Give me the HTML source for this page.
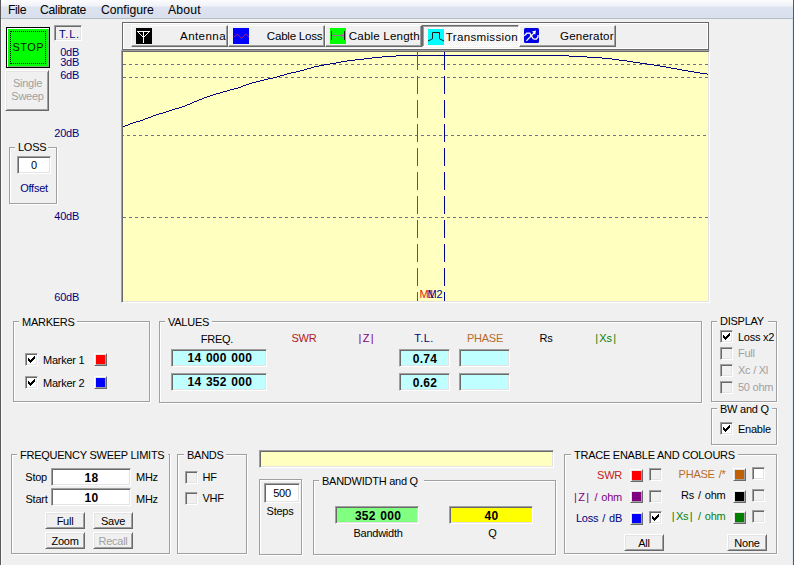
<!DOCTYPE html><html><head><meta charset="utf-8"><style>html,body{margin:0;padding:0;}body{width:795px;height:565px;overflow:hidden;position:relative;background:#f0f0f0;font-family:'Liberation Sans', sans-serif;}div{font-family:'Liberation Sans', sans-serif;}svg{display:block}</style></head><body>
<div style="position:absolute;left:0px;top:0px;width:1px;height:565px;background:#5a5a5a;"></div>
<div style="position:absolute;left:1px;top:0px;width:1px;height:565px;background:#fafafa;"></div>
<div style="position:absolute;left:793px;top:0px;width:1px;height:565px;background:#5a5a5a;"></div>
<div style="position:absolute;left:792px;top:0px;width:1px;height:565px;background:#dfe6ef;"></div>
<div style="position:absolute;left:794px;top:0px;width:1px;height:565px;background:#fff;"></div>
<div style="position:absolute;left:1px;top:0px;width:792px;height:18px;background:linear-gradient(#fcfcfe 0px,#f0f2f8 6px,#dde3ef 7px,#d9dfed 17px,#dde2ee 18px);"></div>
<div style="position:absolute;left:1px;top:18px;width:792px;height:1px;background:#b4bcc8;"></div>
<div style="position:absolute;top:3.68px;font-size:12.2px;line-height:12.2px;color:#000;white-space:pre;left:8px;letter-spacing:-0.4px;">File</div>
<div style="position:absolute;top:3.68px;font-size:12.2px;line-height:12.2px;color:#000;white-space:pre;left:40px;letter-spacing:-0.3px;">Calibrate</div>
<div style="position:absolute;top:3.68px;font-size:12.2px;line-height:12.2px;color:#000;white-space:pre;left:101px;letter-spacing:0px;">Configure</div>
<div style="position:absolute;top:3.68px;font-size:12.2px;line-height:12.2px;color:#000;white-space:pre;left:168px;letter-spacing:0.2px;">About</div>
<div style="position:absolute;left:6px;top:27px;width:44px;height:41px;background:#00ff00;box-sizing:border-box;border:1px solid #000;box-shadow:inset 1px 1px 0 #fff, inset -1px -1px 0 #70b070;"></div>
<div style="position:absolute;left:10px;top:31px;width:36px;height:33px;box-sizing:border-box;border:1px dotted #000;"></div>
<div style="position:absolute;top:42.3px;font-size:11px;line-height:11px;color:#0a200a;white-space:pre;left:-71.7px;width:200px;text-align:center;letter-spacing:0.5px;">STOP</div>
<div style="position:absolute;left:5px;top:70px;width:44px;height:41px;background:#f0f0f0;box-sizing:border-box;border-top:1px solid #fff;border-left:1px solid #fff;border-bottom:1px solid #696969;border-right:1px solid #696969;box-shadow:inset 1px 1px 0 #e3e3e3, inset -1px -1px 0 #a0a0a0;"></div>
<div style="position:absolute;top:78.30000000000001px;font-size:11px;line-height:11px;color:#a0a0a0;white-space:pre;left:-72.5px;width:200px;text-align:center;letter-spacing:-0.25px;">Single</div>
<div style="position:absolute;top:91.30000000000001px;font-size:11px;line-height:11px;color:#a0a0a0;white-space:pre;left:-72.5px;width:200px;text-align:center;letter-spacing:-0.25px;">Sweep</div>
<div style="position:absolute;left:54px;top:25px;width:28px;height:16px;background:#f0f0f0;box-sizing:border-box;border-top:1px solid #a0a0a0;border-left:1px solid #a0a0a0;border-bottom:1px solid #fff;border-right:1px solid #fff;box-shadow:inset 1px 1px 0 #696969, inset -1px -1px 0 #e3e3e3;"></div>
<div style="position:absolute;top:29.299999999999997px;font-size:11px;line-height:11px;color:#000080;white-space:pre;left:-30.5px;width:200px;text-align:center;letter-spacing:0.8px;">T.L.</div>
<div style="position:absolute;top:47.3px;font-size:11px;line-height:11px;color:#000080;white-space:pre;right:716px;text-align:right;letter-spacing:-0.25px;">0dB</div>
<div style="position:absolute;top:57.3px;font-size:11px;line-height:11px;color:#000080;white-space:pre;right:716px;text-align:right;letter-spacing:-0.25px;">3dB</div>
<div style="position:absolute;top:70.30000000000001px;font-size:11px;line-height:11px;color:#000080;white-space:pre;right:716px;text-align:right;letter-spacing:-0.25px;">6dB</div>
<div style="position:absolute;top:128.3px;font-size:11px;line-height:11px;color:#000080;white-space:pre;right:716px;text-align:right;letter-spacing:-0.25px;">20dB</div>
<div style="position:absolute;top:211.3px;font-size:11px;line-height:11px;color:#000080;white-space:pre;right:716px;text-align:right;letter-spacing:-0.25px;">40dB</div>
<div style="position:absolute;top:292.29999999999995px;font-size:11px;line-height:11px;color:#000080;white-space:pre;right:716px;text-align:right;letter-spacing:-0.25px;">60dB</div>
<div style="position:absolute;left:10px;top:148px;width:48px;height:57px;box-sizing:border-box;border:1px solid #fff;"></div>
<div style="position:absolute;left:9px;top:147px;width:48px;height:57px;box-sizing:border-box;border:1px solid #a0a0a0;"></div>
<div style="position:absolute;left:15px;top:145px;width:33px;height:5px;background:#f0f0f0;"></div>
<div style="position:absolute;top:142.3px;font-size:11px;line-height:11px;color:#000;white-space:pre;left:18px;letter-spacing:-0.25px;">LOSS</div>
<div style="position:absolute;left:17px;top:156px;width:34px;height:18px;background:#fff;box-sizing:border-box;border-top:1px solid #a0a0a0;border-left:1px solid #a0a0a0;border-bottom:1px solid #fff;border-right:1px solid #fff;box-shadow:inset 1px 1px 0 #696969, inset -1px -1px 0 #e3e3e3;"></div>
<div style="position:absolute;top:160.3px;font-size:11px;line-height:11px;color:#000;white-space:pre;left:-66px;width:200px;text-align:center;letter-spacing:-0.25px;">0</div>
<div style="position:absolute;top:183.3px;font-size:11px;line-height:11px;color:#000080;white-space:pre;left:-66px;width:200px;text-align:center;letter-spacing:-0.25px;">Offset</div>
<div style="position:absolute;left:122px;top:22px;width:587px;height:28px;box-sizing:border-box;border:1px solid #696969;box-shadow:inset 1px 1px 0 #fff, inset -1px -1px 0 #fff;background:#f0f0f0;"></div>
<div style="position:absolute;left:131px;top:25px;width:97px;height:22px;box-sizing:border-box;border-top:1px solid #fff;border-left:1px solid #fff;border-bottom:1px solid #696969;border-right:1px solid #696969;box-shadow:inset -1px -1px 0 #a0a0a0;background:#f0f0f0;"></div>
<div style="position:absolute;top:30.24px;font-size:11.6px;line-height:11.6px;color:#000;white-space:pre;right:569.0px;text-align:right;letter-spacing:0.4px;">Antenna</div>
<div style="position:absolute;left:228px;top:25px;width:97px;height:22px;box-sizing:border-box;border-top:1px solid #fff;border-left:1px solid #fff;border-bottom:1px solid #696969;border-right:1px solid #696969;box-shadow:inset -1px -1px 0 #a0a0a0;background:#f0f0f0;"></div>
<div style="position:absolute;top:30.24px;font-size:11.6px;line-height:11.6px;color:#000;white-space:pre;right:472.65px;text-align:right;letter-spacing:-0.25px;">Cable Loss</div>
<div style="position:absolute;left:325px;top:25px;width:97px;height:22px;box-sizing:border-box;border-top:1px solid #fff;border-left:1px solid #fff;border-bottom:1px solid #696969;border-right:1px solid #696969;box-shadow:inset -1px -1px 0 #a0a0a0;background:#f0f0f0;"></div>
<div style="position:absolute;top:30.24px;font-size:11.6px;line-height:11.6px;color:#000;white-space:pre;right:375.22999999999996px;text-align:right;letter-spacing:0.17px;">Cable Length</div>
<div style="position:absolute;left:422px;top:25px;width:97px;height:22px;box-sizing:border-box;border-top:1px solid #696969;border-left:1px solid #696969;border-bottom:1px solid #fff;border-right:1px solid #fff;box-shadow:inset 1px 1px 0 #a0a0a0;background-color:#fff;background-image:linear-gradient(45deg,#f0f0f0 25%,transparent 25%,transparent 75%,#f0f0f0 75%),linear-gradient(45deg,#f0f0f0 25%,transparent 25%,transparent 75%,#f0f0f0 75%);background-size:2px 2px;background-position:0 0,1px 1px;"></div>
<div style="position:absolute;top:31.24px;font-size:11.6px;line-height:11.6px;color:#000;white-space:pre;right:277.1px;text-align:right;letter-spacing:0.3px;">Transmission</div>
<div style="position:absolute;left:519px;top:25px;width:97px;height:22px;box-sizing:border-box;border-top:1px solid #fff;border-left:1px solid #fff;border-bottom:1px solid #696969;border-right:1px solid #696969;box-shadow:inset -1px -1px 0 #a0a0a0;background:#f0f0f0;"></div>
<div style="position:absolute;top:30.24px;font-size:11.6px;line-height:11.6px;color:#000;white-space:pre;right:181.22000000000003px;text-align:right;letter-spacing:0.18px;">Generator</div>
<svg style="position:absolute;left:136px;top:28px" width="16" height="16"><rect width="16" height="16" fill="#000"/><path d="M1 3.5 H14 M7.5 3.5 V15 M1.5 3.5 L7.5 9.5 L13.5 3.5" stroke="#fff" stroke-width="1" fill="none"/></svg>
<svg style="position:absolute;left:233px;top:28px" width="16" height="16"><rect width="16" height="16" fill="#0000ff"/><path d="M1 9 L4.5 6 L8.5 10.5 L12.5 6 L16 9" stroke="#a02888" stroke-width="1" fill="none"/></svg>
<svg style="position:absolute;left:330px;top:28px" width="16" height="16"><rect width="16" height="16" fill="#00ff00"/><path d="M1.5 3 V12 M14.5 3 V12" stroke="#1a1a1a" stroke-width="1" fill="none"/><path d="M2 7.5 H14 M4.5 5.5 L2.5 7.5 L4.5 9.5 M11.5 5.5 L13.5 7.5 L11.5 9.5" stroke="#9a6aa0" stroke-width="1" fill="none"/></svg>
<svg style="position:absolute;left:428px;top:29px" width="16" height="16"><rect width="16" height="16" fill="#00ffff"/><path d="M0 12 L4.5 9.8 V3.5 H11.5 V9.8 L16 12" stroke="#1a1a1a" stroke-width="1" fill="none"/><rect x="5" y="4" width="1" height="1" fill="#ff9090"/><rect x="10" y="4" width="1" height="1" fill="#ff9090"/></svg>
<svg style="position:absolute;left:524px;top:28px" width="15" height="15"><rect width="15" height="15" rx="1.5" fill="#0000e0"/><path d="M0.3 7.8 L2.8 5.2 L5.8 5.2 L9 10.6 L10.2 11.2 L12.4 11.2 L14 9 L14 7" stroke="#fff" stroke-width="1.3" fill="none"/><path d="M6.6 7.2 L7.6 8.9" stroke="#ffff40" stroke-width="1.6"/><path d="M2.4 12.8 L10.5 4.5" stroke="#fff" stroke-width="1.2"/><path d="M8 3.6 L12 2.6 L11.2 6.8 Z" fill="#fff"/></svg>
<div style="position:absolute;left:121px;top:50px;width:589px;height:253px;box-sizing:border-box;background:#ffffc0;border-top:1px solid #a0a0a0;border-left:1px solid #a0a0a0;border-bottom:1px solid #fff;border-right:1px solid #fff;box-shadow:inset 1px 1px 0 #696969, inset -1px -1px 0 #e3e3e3;"></div>
<svg style="position:absolute;left:123px;top:52px" width="585" height="249" shape-rendering="crispEdges"><line x1="0" y1="12.5" x2="585" y2="12.5" stroke="#707088" stroke-width="1" stroke-dasharray="3 3" stroke-dashoffset="0"/><line x1="0" y1="25.5" x2="585" y2="25.5" stroke="#707088" stroke-width="1" stroke-dasharray="3 3" stroke-dashoffset="0"/><line x1="0" y1="83.5" x2="585" y2="83.5" stroke="#707088" stroke-width="1" stroke-dasharray="3 3" stroke-dashoffset="2"/><line x1="0" y1="165.5" x2="585" y2="165.5" stroke="#707088" stroke-width="1" stroke-dasharray="3 3" stroke-dashoffset="0"/><path d="M0 74h1v1h-1zM1 74h1v1h-1zM2 73h1v1h-1zM3 73h1v1h-1zM4 73h1v1h-1zM5 72h1v1h-1zM6 72h1v1h-1zM7 71h1v1h-1zM8 71h1v1h-1zM9 71h1v1h-1zM10 70h1v1h-1zM11 70h1v1h-1zM12 70h1v1h-1zM13 69h1v1h-1zM14 69h1v1h-1zM15 69h1v1h-1zM16 69h1v1h-1zM17 68h1v1h-1zM18 68h1v1h-1zM19 68h1v1h-1zM20 67h1v1h-1zM21 67h1v1h-1zM22 66h1v1h-1zM23 66h1v1h-1zM24 66h1v1h-1zM25 65h1v1h-1zM26 65h1v1h-1zM27 65h1v1h-1zM28 64h1v1h-1zM29 64h1v1h-1zM30 63h1v1h-1zM31 63h1v1h-1zM32 63h1v1h-1zM33 62h1v1h-1zM34 62h1v1h-1zM35 62h1v1h-1zM36 61h1v1h-1zM37 61h1v1h-1zM38 61h1v1h-1zM39 61h1v1h-1zM40 60h1v1h-1zM41 60h1v1h-1zM42 60h1v1h-1zM43 59h1v1h-1zM44 59h1v1h-1zM45 59h1v1h-1zM46 58h1v1h-1zM47 58h1v1h-1zM48 58h1v1h-1zM49 57h1v1h-1zM50 57h1v1h-1zM51 57h1v1h-1zM52 56h1v1h-1zM53 56h1v1h-1zM54 56h1v1h-1zM55 56h1v1h-1zM56 55h1v1h-1zM57 55h1v1h-1zM58 55h1v1h-1zM59 54h1v1h-1zM60 54h1v1h-1zM61 54h1v1h-1zM62 53h1v1h-1zM63 53h1v1h-1zM64 52h1v1h-1zM65 52h1v1h-1zM66 52h1v1h-1zM67 51h1v1h-1zM68 51h1v1h-1zM69 50h1v1h-1zM70 50h1v1h-1zM71 49h1v1h-1zM72 49h1v1h-1zM73 49h1v1h-1zM74 48h1v1h-1zM75 48h1v1h-1zM76 47h1v1h-1zM77 47h1v1h-1zM78 47h1v1h-1zM79 46h1v1h-1zM80 46h1v1h-1zM81 45h1v1h-1zM82 45h1v1h-1zM83 45h1v1h-1zM84 44h1v1h-1zM85 44h1v1h-1zM86 44h1v1h-1zM87 43h1v1h-1zM88 43h1v1h-1zM89 43h1v1h-1zM90 42h1v1h-1zM91 42h1v1h-1zM92 42h1v1h-1zM93 41h1v1h-1zM94 41h1v1h-1zM95 41h1v1h-1zM96 41h1v1h-1zM97 40h1v1h-1zM98 40h1v1h-1zM99 40h1v1h-1zM100 39h1v1h-1zM101 39h1v1h-1zM102 39h1v1h-1zM103 39h1v1h-1zM104 38h1v1h-1zM105 38h1v1h-1zM106 38h1v1h-1zM107 37h1v1h-1zM108 37h1v1h-1zM109 37h1v1h-1zM110 37h1v1h-1zM111 36h1v1h-1zM112 36h1v1h-1zM113 36h1v1h-1zM114 36h1v1h-1zM115 35h1v1h-1zM116 35h1v1h-1zM117 35h1v1h-1zM118 34h1v1h-1zM119 34h1v1h-1zM120 33h1v1h-1zM121 33h1v1h-1zM122 33h1v1h-1zM123 32h1v1h-1zM124 32h1v1h-1zM125 32h1v1h-1zM126 31h1v1h-1zM127 31h1v1h-1zM128 31h1v1h-1zM129 30h1v1h-1zM130 30h1v1h-1zM131 30h1v1h-1zM132 30h1v1h-1zM133 29h1v1h-1zM134 29h1v1h-1zM135 29h1v1h-1zM136 29h1v1h-1zM137 28h1v1h-1zM138 28h1v1h-1zM139 28h1v1h-1zM140 28h1v1h-1zM141 27h1v1h-1zM142 27h1v1h-1zM143 27h1v1h-1zM144 27h1v1h-1zM145 26h1v1h-1zM146 26h1v1h-1zM147 26h1v1h-1zM148 26h1v1h-1zM149 26h1v1h-1zM150 25h1v1h-1zM151 25h1v1h-1zM152 25h1v1h-1zM153 25h1v1h-1zM154 24h1v1h-1zM155 24h1v1h-1zM156 24h1v1h-1zM157 23h1v1h-1zM158 23h1v1h-1zM159 23h1v1h-1zM160 23h1v1h-1zM161 22h1v1h-1zM162 22h1v1h-1zM163 22h1v1h-1zM164 21h1v1h-1zM165 21h1v1h-1zM166 21h1v1h-1zM167 21h1v1h-1zM168 20h1v1h-1zM169 20h1v1h-1zM170 20h1v1h-1zM171 20h1v1h-1zM172 20h1v1h-1zM173 19h1v1h-1zM174 19h1v1h-1zM175 19h1v1h-1zM176 19h1v1h-1zM177 18h1v1h-1zM178 18h1v1h-1zM179 18h1v1h-1zM180 18h1v1h-1zM181 17h1v1h-1zM182 17h1v1h-1zM183 17h1v1h-1zM184 16h1v1h-1zM185 16h1v1h-1zM186 16h1v1h-1zM187 16h1v1h-1zM188 15h1v1h-1zM189 15h1v1h-1zM190 15h1v1h-1zM191 14h1v1h-1zM192 14h1v1h-1zM193 14h1v1h-1zM194 14h1v1h-1zM195 14h1v1h-1zM196 13h1v1h-1zM197 13h1v1h-1zM198 13h1v1h-1zM199 13h1v1h-1zM200 13h1v1h-1zM201 12h1v1h-1zM202 12h1v1h-1zM203 12h1v1h-1zM204 12h1v1h-1zM205 12h1v1h-1zM206 12h1v1h-1zM207 11h1v1h-1zM208 11h1v1h-1zM209 11h1v1h-1zM210 11h1v1h-1zM211 11h1v1h-1zM212 11h1v1h-1zM213 10h1v1h-1zM214 10h1v1h-1zM215 10h1v1h-1zM216 10h1v1h-1zM217 10h1v1h-1zM218 9h1v1h-1zM219 9h1v1h-1zM220 9h1v1h-1zM221 9h1v1h-1zM222 9h1v1h-1zM223 9h1v1h-1zM224 8h1v1h-1zM225 8h1v1h-1zM226 8h1v1h-1zM227 8h1v1h-1zM228 8h1v1h-1zM229 8h1v1h-1zM230 8h1v1h-1zM231 8h1v1h-1zM232 7h1v1h-1zM233 7h1v1h-1zM234 7h1v1h-1zM235 7h1v1h-1zM236 7h1v1h-1zM237 7h1v1h-1zM238 7h1v1h-1zM239 7h1v1h-1zM240 7h1v1h-1zM241 6h1v1h-1zM242 6h1v1h-1zM243 6h1v1h-1zM244 6h1v1h-1zM245 6h1v1h-1zM246 6h1v1h-1zM247 6h1v1h-1zM248 6h1v1h-1zM249 5h1v1h-1zM250 5h1v1h-1zM251 5h1v1h-1zM252 5h1v1h-1zM253 5h1v1h-1zM254 5h1v1h-1zM255 5h1v1h-1zM256 5h1v1h-1zM257 5h1v1h-1zM258 5h1v1h-1zM259 4h1v1h-1zM260 4h1v1h-1zM261 4h1v1h-1zM262 4h1v1h-1zM263 4h1v1h-1zM264 4h1v1h-1zM265 4h1v1h-1zM266 4h1v1h-1zM267 4h1v1h-1zM268 4h1v1h-1zM269 4h1v1h-1zM270 4h1v1h-1zM271 4h1v1h-1zM272 4h1v1h-1zM273 3h1v1h-1zM274 3h1v1h-1zM275 3h1v1h-1zM276 3h1v1h-1zM277 3h1v1h-1zM278 3h1v1h-1zM279 3h1v1h-1zM280 3h1v1h-1zM281 3h1v1h-1zM282 3h1v1h-1zM283 3h1v1h-1zM284 3h1v1h-1zM285 3h1v1h-1zM286 3h1v1h-1zM287 3h1v1h-1zM288 3h1v1h-1zM289 3h1v1h-1zM290 3h1v1h-1zM291 3h1v1h-1zM292 3h1v1h-1zM293 3h1v1h-1zM294 3h1v1h-1zM295 3h1v1h-1zM296 3h1v1h-1zM297 3h1v1h-1zM298 3h1v1h-1zM299 3h1v1h-1zM300 3h1v1h-1zM301 3h1v1h-1zM302 3h1v1h-1zM303 3h1v1h-1zM304 3h1v1h-1zM305 3h1v1h-1zM306 3h1v1h-1zM307 3h1v1h-1zM308 3h1v1h-1zM309 3h1v1h-1zM310 3h1v1h-1zM311 3h1v1h-1zM312 3h1v1h-1zM313 3h1v1h-1zM314 3h1v1h-1zM315 3h1v1h-1zM316 3h1v1h-1zM317 3h1v1h-1zM318 3h1v1h-1zM319 3h1v1h-1zM320 3h1v1h-1zM321 3h1v1h-1zM322 3h1v1h-1zM323 3h1v1h-1zM324 3h1v1h-1zM325 3h1v1h-1zM326 3h1v1h-1zM327 3h1v1h-1zM328 3h1v1h-1zM329 3h1v1h-1zM330 3h1v1h-1zM331 3h1v1h-1zM332 3h1v1h-1zM333 3h1v1h-1zM334 3h1v1h-1zM335 3h1v1h-1zM336 3h1v1h-1zM337 3h1v1h-1zM338 3h1v1h-1zM339 3h1v1h-1zM340 3h1v1h-1zM341 3h1v1h-1zM342 3h1v1h-1zM343 3h1v1h-1zM344 3h1v1h-1zM345 3h1v1h-1zM346 3h1v1h-1zM347 3h1v1h-1zM348 3h1v1h-1zM349 3h1v1h-1zM350 3h1v1h-1zM351 3h1v1h-1zM352 3h1v1h-1zM353 3h1v1h-1zM354 3h1v1h-1zM355 3h1v1h-1zM356 3h1v1h-1zM357 3h1v1h-1zM358 3h1v1h-1zM359 3h1v1h-1zM360 3h1v1h-1zM361 3h1v1h-1zM362 3h1v1h-1zM363 3h1v1h-1zM364 3h1v1h-1zM365 3h1v1h-1zM366 3h1v1h-1zM367 3h1v1h-1zM368 3h1v1h-1zM369 3h1v1h-1zM370 3h1v1h-1zM371 3h1v1h-1zM372 3h1v1h-1zM373 3h1v1h-1zM374 3h1v1h-1zM375 3h1v1h-1zM376 3h1v1h-1zM377 3h1v1h-1zM378 3h1v1h-1zM379 3h1v1h-1zM380 3h1v1h-1zM381 3h1v1h-1zM382 3h1v1h-1zM383 3h1v1h-1zM384 3h1v1h-1zM385 3h1v1h-1zM386 3h1v1h-1zM387 3h1v1h-1zM388 3h1v1h-1zM389 3h1v1h-1zM390 3h1v1h-1zM391 3h1v1h-1zM392 3h1v1h-1zM393 3h1v1h-1zM394 3h1v1h-1zM395 3h1v1h-1zM396 3h1v1h-1zM397 3h1v1h-1zM398 3h1v1h-1zM399 3h1v1h-1zM400 3h1v1h-1zM401 3h1v1h-1zM402 3h1v1h-1zM403 3h1v1h-1zM404 3h1v1h-1zM405 3h1v1h-1zM406 3h1v1h-1zM407 3h1v1h-1zM408 3h1v1h-1zM409 3h1v1h-1zM410 3h1v1h-1zM411 3h1v1h-1zM412 3h1v1h-1zM413 3h1v1h-1zM414 3h1v1h-1zM415 3h1v1h-1zM416 3h1v1h-1zM417 3h1v1h-1zM418 3h1v1h-1zM419 3h1v1h-1zM420 3h1v1h-1zM421 3h1v1h-1zM422 3h1v1h-1zM423 3h1v1h-1zM424 3h1v1h-1zM425 3h1v1h-1zM426 3h1v1h-1zM427 3h1v1h-1zM428 3h1v1h-1zM429 3h1v1h-1zM430 3h1v1h-1zM431 3h1v1h-1zM432 3h1v1h-1zM433 3h1v1h-1zM434 3h1v1h-1zM435 3h1v1h-1zM436 3h1v1h-1zM437 3h1v1h-1zM438 3h1v1h-1zM439 3h1v1h-1zM440 3h1v1h-1zM441 3h1v1h-1zM442 3h1v1h-1zM443 3h1v1h-1zM444 3h1v1h-1zM445 3h1v1h-1zM446 4h1v1h-1zM447 4h1v1h-1zM448 4h1v1h-1zM449 4h1v1h-1zM450 4h1v1h-1zM451 4h1v1h-1zM452 4h1v1h-1zM453 4h1v1h-1zM454 4h1v1h-1zM455 4h1v1h-1zM456 4h1v1h-1zM457 4h1v1h-1zM458 4h1v1h-1zM459 4h1v1h-1zM460 4h1v1h-1zM461 4h1v1h-1zM462 4h1v1h-1zM463 4h1v1h-1zM464 5h1v1h-1zM465 5h1v1h-1zM466 5h1v1h-1zM467 5h1v1h-1zM468 5h1v1h-1zM469 5h1v1h-1zM470 5h1v1h-1zM471 5h1v1h-1zM472 5h1v1h-1zM473 5h1v1h-1zM474 5h1v1h-1zM475 5h1v1h-1zM476 5h1v1h-1zM477 5h1v1h-1zM478 5h1v1h-1zM479 6h1v1h-1zM480 6h1v1h-1zM481 6h1v1h-1zM482 6h1v1h-1zM483 6h1v1h-1zM484 6h1v1h-1zM485 6h1v1h-1zM486 6h1v1h-1zM487 6h1v1h-1zM488 6h1v1h-1zM489 7h1v1h-1zM490 7h1v1h-1zM491 7h1v1h-1zM492 7h1v1h-1zM493 7h1v1h-1zM494 7h1v1h-1zM495 7h1v1h-1zM496 8h1v1h-1zM497 8h1v1h-1zM498 8h1v1h-1zM499 8h1v1h-1zM500 8h1v1h-1zM501 8h1v1h-1zM502 8h1v1h-1zM503 8h1v1h-1zM504 9h1v1h-1zM505 9h1v1h-1zM506 9h1v1h-1zM507 9h1v1h-1zM508 9h1v1h-1zM509 9h1v1h-1zM510 10h1v1h-1zM511 10h1v1h-1zM512 10h1v1h-1zM513 10h1v1h-1zM514 10h1v1h-1zM515 10h1v1h-1zM516 10h1v1h-1zM517 11h1v1h-1zM518 11h1v1h-1zM519 11h1v1h-1zM520 11h1v1h-1zM521 11h1v1h-1zM522 11h1v1h-1zM523 11h1v1h-1zM524 12h1v1h-1zM525 12h1v1h-1zM526 12h1v1h-1zM527 12h1v1h-1zM528 12h1v1h-1zM529 12h1v1h-1zM530 12h1v1h-1zM531 13h1v1h-1zM532 13h1v1h-1zM533 13h1v1h-1zM534 13h1v1h-1zM535 13h1v1h-1zM536 13h1v1h-1zM537 14h1v1h-1zM538 14h1v1h-1zM539 14h1v1h-1zM540 14h1v1h-1zM541 14h1v1h-1zM542 14h1v1h-1zM543 15h1v1h-1zM544 15h1v1h-1zM545 15h1v1h-1zM546 15h1v1h-1zM547 15h1v1h-1zM548 16h1v1h-1zM549 16h1v1h-1zM550 16h1v1h-1zM551 16h1v1h-1zM552 16h1v1h-1zM553 16h1v1h-1zM554 17h1v1h-1zM555 17h1v1h-1zM556 17h1v1h-1zM557 17h1v1h-1zM558 17h1v1h-1zM559 18h1v1h-1zM560 18h1v1h-1zM561 18h1v1h-1zM562 18h1v1h-1zM563 18h1v1h-1zM564 18h1v1h-1zM565 19h1v1h-1zM566 19h1v1h-1zM567 19h1v1h-1zM568 19h1v1h-1zM569 19h1v1h-1zM570 19h1v1h-1zM571 20h1v1h-1zM572 20h1v1h-1zM573 20h1v1h-1zM574 20h1v1h-1zM575 20h1v1h-1zM576 20h1v1h-1zM577 21h1v1h-1zM578 21h1v1h-1zM579 21h1v1h-1zM580 21h1v1h-1zM581 21h1v1h-1zM582 21h1v1h-1zM583 21h1v1h-1zM584 22h1v1h-1z" fill="#000080"/><line x1="294.5" y1="0" x2="294.5" y2="249" stroke="#c03020" stroke-width="1" stroke-dasharray="18 6"/><line x1="321.5" y1="0" x2="321.5" y2="249" stroke="#000090" stroke-width="1" stroke-dasharray="18 6"/></svg>
<div style="position:absolute;top:289.29999999999995px;font-size:11px;line-height:11px;color:#e02010;white-space:pre;left:419.5px;letter-spacing:-0.25px;">M1</div>
<div style="position:absolute;top:289.29999999999995px;font-size:11px;line-height:11px;color:#000090;white-space:pre;left:427.5px;letter-spacing:-0.25px;">M2</div>
<div style="position:absolute;left:14px;top:322px;width:137px;height:81px;box-sizing:border-box;border:1px solid #fff;"></div>
<div style="position:absolute;left:13px;top:321px;width:137px;height:81px;box-sizing:border-box;border:1px solid #a0a0a0;"></div>
<div style="position:absolute;left:19px;top:319px;width:58px;height:5px;background:#f0f0f0;"></div>
<div style="position:absolute;top:317.29999999999995px;font-size:11px;line-height:11px;color:#000;white-space:pre;left:22px;letter-spacing:-0.25px;">MARKERS</div>
<div style="position:absolute;left:25px;top:353px;width:13px;height:13px;background:#fff;box-sizing:border-box;border-top:1px solid #a0a0a0;border-left:1px solid #a0a0a0;border-bottom:1px solid #fff;border-right:1px solid #fff;box-shadow:inset 1px 1px 0 #696969, inset -1px -1px 0 #e3e3e3;"></div>
<svg style="position:absolute;left:25px;top:353px" width="13" height="13"><path d="M3 5h1v3h-1z M4 6h1v3h-1z M5 7h1v3h-1z M6 6h1v3h-1z M7 5h1v3h-1z M8 4h1v3h-1z M9 3h1v3h-1z" fill="#000" shape-rendering="crispEdges"/></svg>
<div style="position:absolute;top:355.29999999999995px;font-size:11px;line-height:11px;color:#000;white-space:pre;left:43px;letter-spacing:-0.25px;">Marker 1</div>
<div style="position:absolute;left:94px;top:353px;width:13px;height:13px;background:#ff0000;box-sizing:border-box;border-top:1px solid #fff;border-left:1px solid #fff;border-bottom:1px solid #696969;border-right:1px solid #696969;box-shadow:inset 1px 1px 0 #e3e3e3, inset -1px -1px 0 #a0a0a0;"></div>
<div style="position:absolute;left:25px;top:376px;width:13px;height:13px;background:#fff;box-sizing:border-box;border-top:1px solid #a0a0a0;border-left:1px solid #a0a0a0;border-bottom:1px solid #fff;border-right:1px solid #fff;box-shadow:inset 1px 1px 0 #696969, inset -1px -1px 0 #e3e3e3;"></div>
<svg style="position:absolute;left:25px;top:376px" width="13" height="13"><path d="M3 5h1v3h-1z M4 6h1v3h-1z M5 7h1v3h-1z M6 6h1v3h-1z M7 5h1v3h-1z M8 4h1v3h-1z M9 3h1v3h-1z" fill="#000" shape-rendering="crispEdges"/></svg>
<div style="position:absolute;top:378.29999999999995px;font-size:11px;line-height:11px;color:#000;white-space:pre;left:43px;letter-spacing:-0.25px;">Marker 2</div>
<div style="position:absolute;left:94px;top:376px;width:13px;height:13px;background:#0000ff;box-sizing:border-box;border-top:1px solid #fff;border-left:1px solid #fff;border-bottom:1px solid #696969;border-right:1px solid #696969;box-shadow:inset 1px 1px 0 #e3e3e3, inset -1px -1px 0 #a0a0a0;"></div>
<div style="position:absolute;left:160px;top:322px;width:543px;height:82px;box-sizing:border-box;border:1px solid #fff;"></div>
<div style="position:absolute;left:159px;top:321px;width:543px;height:82px;box-sizing:border-box;border:1px solid #a0a0a0;"></div>
<div style="position:absolute;left:165px;top:319px;width:47px;height:5px;background:#f0f0f0;"></div>
<div style="position:absolute;top:317.29999999999995px;font-size:11px;line-height:11px;color:#000;white-space:pre;left:168px;letter-spacing:-0.25px;">VALUES</div>
<div style="position:absolute;top:334.29999999999995px;font-size:11px;line-height:11px;color:#000;white-space:pre;left:117px;width:200px;text-align:center;letter-spacing:-0.25px;">FREQ.</div>
<div style="position:absolute;top:333.29999999999995px;font-size:11px;line-height:11px;color:#b01818;white-space:pre;left:204px;width:200px;text-align:center;letter-spacing:-0.25px;">SWR</div>
<div style="position:absolute;top:333.29999999999995px;font-size:11px;line-height:11px;color:#800080;white-space:pre;left:266px;width:200px;text-align:center;letter-spacing:-0.25px;"><span style="margin:0 1.6px">|</span>Z<span style="margin:0 1.6px">|</span></div>
<div style="position:absolute;top:333.29999999999995px;font-size:11px;line-height:11px;color:#000080;white-space:pre;left:324px;width:200px;text-align:center;letter-spacing:0.5px;">T.L.</div>
<div style="position:absolute;top:333.29999999999995px;font-size:11px;line-height:11px;color:#b86c28;white-space:pre;left:385px;width:200px;text-align:center;letter-spacing:-0.25px;">PHASE</div>
<div style="position:absolute;top:333.29999999999995px;font-size:11px;line-height:11px;color:#000;white-space:pre;left:446px;width:200px;text-align:center;letter-spacing:-0.25px;">Rs</div>
<div style="position:absolute;top:333.29999999999995px;font-size:11px;line-height:11px;color:#0a800a;white-space:pre;left:505.5px;width:200px;text-align:center;letter-spacing:-0.25px;"><span style="margin:0 1.6px">|</span>Xs<span style="margin:0 1.6px">|</span></div>
<div style="position:absolute;left:171px;top:349px;width:96px;height:18px;background:#c0ffff;box-sizing:border-box;border-top:1px solid #a0a0a0;border-left:1px solid #a0a0a0;border-bottom:1px solid #fff;border-right:1px solid #fff;box-shadow:inset 1px 1px 0 #696969, inset -1px -1px 0 #e3e3e3;"></div>
<div style="position:absolute;top:351.59999999999997px;font-size:12px;line-height:12px;color:#000;white-space:pre;font-weight:bold;left:119.80000000000001px;width:200px;text-align:center;letter-spacing:0.25px;word-spacing:1px;">14 000 000</div>
<div style="position:absolute;left:399px;top:349px;width:51px;height:18px;background:#c0ffff;box-sizing:border-box;border-top:1px solid #a0a0a0;border-left:1px solid #a0a0a0;border-bottom:1px solid #fff;border-right:1px solid #fff;box-shadow:inset 1px 1px 0 #696969, inset -1px -1px 0 #e3e3e3;"></div>
<div style="position:absolute;top:352.7px;font-size:12px;line-height:12px;color:#000;white-space:pre;font-weight:bold;left:325px;width:200px;text-align:center;letter-spacing:0.25px;word-spacing:1px;">0.74</div>
<div style="position:absolute;left:459px;top:349px;width:51px;height:18px;background:#c0ffff;box-sizing:border-box;border-top:1px solid #a0a0a0;border-left:1px solid #a0a0a0;border-bottom:1px solid #fff;border-right:1px solid #fff;box-shadow:inset 1px 1px 0 #696969, inset -1px -1px 0 #e3e3e3;"></div>
<div style="position:absolute;left:171px;top:373px;width:96px;height:18px;background:#c0ffff;box-sizing:border-box;border-top:1px solid #a0a0a0;border-left:1px solid #a0a0a0;border-bottom:1px solid #fff;border-right:1px solid #fff;box-shadow:inset 1px 1px 0 #696969, inset -1px -1px 0 #e3e3e3;"></div>
<div style="position:absolute;top:375.59999999999997px;font-size:12px;line-height:12px;color:#000;white-space:pre;font-weight:bold;left:119.80000000000001px;width:200px;text-align:center;letter-spacing:0.25px;word-spacing:1px;">14 352 000</div>
<div style="position:absolute;left:399px;top:373px;width:51px;height:18px;background:#c0ffff;box-sizing:border-box;border-top:1px solid #a0a0a0;border-left:1px solid #a0a0a0;border-bottom:1px solid #fff;border-right:1px solid #fff;box-shadow:inset 1px 1px 0 #696969, inset -1px -1px 0 #e3e3e3;"></div>
<div style="position:absolute;top:376.7px;font-size:12px;line-height:12px;color:#000;white-space:pre;font-weight:bold;left:325px;width:200px;text-align:center;letter-spacing:0.25px;word-spacing:1px;">0.62</div>
<div style="position:absolute;left:459px;top:373px;width:51px;height:18px;background:#c0ffff;box-sizing:border-box;border-top:1px solid #a0a0a0;border-left:1px solid #a0a0a0;border-bottom:1px solid #fff;border-right:1px solid #fff;box-shadow:inset 1px 1px 0 #696969, inset -1px -1px 0 #e3e3e3;"></div>
<div style="position:absolute;left:712px;top:322px;width:66px;height:81px;box-sizing:border-box;border:1px solid #fff;"></div>
<div style="position:absolute;left:711px;top:321px;width:66px;height:81px;box-sizing:border-box;border:1px solid #a0a0a0;"></div>
<div style="position:absolute;left:717px;top:319px;width:51px;height:5px;background:#f0f0f0;"></div>
<div style="position:absolute;top:316.29999999999995px;font-size:11px;line-height:11px;color:#000;white-space:pre;left:720px;letter-spacing:-0.25px;">DISPLAY</div>
<div style="position:absolute;left:720px;top:330px;width:13px;height:13px;background:#fff;box-sizing:border-box;border-top:1px solid #a0a0a0;border-left:1px solid #a0a0a0;border-bottom:1px solid #fff;border-right:1px solid #fff;box-shadow:inset 1px 1px 0 #696969, inset -1px -1px 0 #e3e3e3;"></div>
<svg style="position:absolute;left:720px;top:330px" width="13" height="13"><path d="M3 5h1v3h-1z M4 6h1v3h-1z M5 7h1v3h-1z M6 6h1v3h-1z M7 5h1v3h-1z M8 4h1v3h-1z M9 3h1v3h-1z" fill="#000" shape-rendering="crispEdges"/></svg>
<div style="position:absolute;top:332.29999999999995px;font-size:11px;line-height:11px;color:#000;white-space:pre;left:738px;letter-spacing:-0.25px;">Loss x2</div>
<div style="position:absolute;left:720px;top:347px;width:13px;height:13px;background:#f0f0f0;box-sizing:border-box;border-top:1px solid #a0a0a0;border-left:1px solid #a0a0a0;border-bottom:1px solid #fff;border-right:1px solid #fff;box-shadow:inset 1px 1px 0 #696969, inset -1px -1px 0 #e3e3e3;"></div>
<div style="position:absolute;top:348.29999999999995px;font-size:11px;line-height:11px;color:#a0a0a0;white-space:pre;left:738px;letter-spacing:-0.25px;">Full</div>
<div style="position:absolute;left:720px;top:364px;width:13px;height:13px;background:#f0f0f0;box-sizing:border-box;border-top:1px solid #a0a0a0;border-left:1px solid #a0a0a0;border-bottom:1px solid #fff;border-right:1px solid #fff;box-shadow:inset 1px 1px 0 #696969, inset -1px -1px 0 #e3e3e3;"></div>
<div style="position:absolute;top:365.29999999999995px;font-size:11px;line-height:11px;color:#a0a0a0;white-space:pre;left:738px;letter-spacing:-0.25px;">Xc / Xl</div>
<div style="position:absolute;left:720px;top:381px;width:13px;height:13px;background:#f0f0f0;box-sizing:border-box;border-top:1px solid #a0a0a0;border-left:1px solid #a0a0a0;border-bottom:1px solid #fff;border-right:1px solid #fff;box-shadow:inset 1px 1px 0 #696969, inset -1px -1px 0 #e3e3e3;"></div>
<div style="position:absolute;top:382.29999999999995px;font-size:11px;line-height:11px;color:#a0a0a0;white-space:pre;left:738px;letter-spacing:-0.25px;">50 ohm</div>
<div style="position:absolute;left:712px;top:409px;width:66px;height:37px;box-sizing:border-box;border:1px solid #fff;"></div>
<div style="position:absolute;left:711px;top:408px;width:66px;height:37px;box-sizing:border-box;border:1px solid #a0a0a0;"></div>
<div style="position:absolute;left:717px;top:406px;width:55px;height:5px;background:#f0f0f0;"></div>
<div style="position:absolute;top:404.29999999999995px;font-size:11px;line-height:11px;color:#000;white-space:pre;left:720px;letter-spacing:-0.25px;">BW and Q</div>
<div style="position:absolute;left:720px;top:422px;width:13px;height:13px;background:#fff;box-sizing:border-box;border-top:1px solid #a0a0a0;border-left:1px solid #a0a0a0;border-bottom:1px solid #fff;border-right:1px solid #fff;box-shadow:inset 1px 1px 0 #696969, inset -1px -1px 0 #e3e3e3;"></div>
<svg style="position:absolute;left:720px;top:422px" width="13" height="13"><path d="M3 5h1v3h-1z M4 6h1v3h-1z M5 7h1v3h-1z M6 6h1v3h-1z M7 5h1v3h-1z M8 4h1v3h-1z M9 3h1v3h-1z" fill="#000" shape-rendering="crispEdges"/></svg>
<div style="position:absolute;top:424.29999999999995px;font-size:11px;line-height:11px;color:#000;white-space:pre;left:738px;letter-spacing:-0.25px;">Enable</div>
<div style="position:absolute;left:12px;top:455px;width:159px;height:100px;box-sizing:border-box;border:1px solid #fff;"></div>
<div style="position:absolute;left:11px;top:454px;width:159px;height:100px;box-sizing:border-box;border:1px solid #a0a0a0;"></div>
<div style="position:absolute;left:17px;top:452px;width:151px;height:5px;background:#f0f0f0;"></div>
<div style="position:absolute;top:450.29999999999995px;font-size:11px;line-height:11px;color:#000;white-space:pre;left:20px;letter-spacing:-0.25px;">FREQUENCY SWEEP LIMITS</div>
<div style="position:absolute;top:472.29999999999995px;font-size:11px;line-height:11px;color:#000;white-space:pre;right:748px;text-align:right;letter-spacing:-0.25px;">Stop</div>
<div style="position:absolute;left:51px;top:468px;width:80px;height:18px;background:#fff;box-sizing:border-box;border-top:1px solid #a0a0a0;border-left:1px solid #a0a0a0;border-bottom:1px solid #fff;border-right:1px solid #fff;box-shadow:inset 1px 1px 0 #696969, inset -1px -1px 0 #e3e3e3;"></div>
<div style="position:absolute;top:471.7px;font-size:12px;line-height:12px;color:#000;white-space:pre;font-weight:bold;left:-8.5px;width:200px;text-align:center;letter-spacing:0.25px;word-spacing:1px;">18</div>
<div style="position:absolute;top:472.29999999999995px;font-size:11px;line-height:11px;color:#000;white-space:pre;left:136px;letter-spacing:-0.25px;">MHz</div>
<div style="position:absolute;top:493.79999999999995px;font-size:11px;line-height:11px;color:#000;white-space:pre;right:747.5px;text-align:right;letter-spacing:-0.25px;">Start</div>
<div style="position:absolute;left:51px;top:488px;width:80px;height:18px;background:#fff;box-sizing:border-box;border-top:1px solid #a0a0a0;border-left:1px solid #a0a0a0;border-bottom:1px solid #fff;border-right:1px solid #fff;box-shadow:inset 1px 1px 0 #696969, inset -1px -1px 0 #e3e3e3;"></div>
<div style="position:absolute;top:492.09999999999997px;font-size:12px;line-height:12px;color:#000;white-space:pre;font-weight:bold;left:-8.5px;width:200px;text-align:center;letter-spacing:0.25px;word-spacing:1px;">10</div>
<div style="position:absolute;top:493.79999999999995px;font-size:11px;line-height:11px;color:#000;white-space:pre;left:136px;letter-spacing:-0.25px;">MHz</div>
<div style="position:absolute;left:45px;top:512px;width:40px;height:17px;background:#f0f0f0;box-sizing:border-box;border-top:1px solid #fff;border-left:1px solid #fff;border-bottom:1px solid #696969;border-right:1px solid #696969;box-shadow:inset 1px 1px 0 #e3e3e3, inset -1px -1px 0 #a0a0a0;"></div>
<div style="position:absolute;top:516.3px;font-size:11px;line-height:11px;color:#000;white-space:pre;left:-35px;width:200px;text-align:center;letter-spacing:-0.25px;">Full</div>
<div style="position:absolute;left:93px;top:512px;width:40px;height:17px;background:#f0f0f0;box-sizing:border-box;border-top:1px solid #fff;border-left:1px solid #fff;border-bottom:1px solid #696969;border-right:1px solid #696969;box-shadow:inset 1px 1px 0 #e3e3e3, inset -1px -1px 0 #a0a0a0;"></div>
<div style="position:absolute;top:516.3px;font-size:11px;line-height:11px;color:#000;white-space:pre;left:13px;width:200px;text-align:center;letter-spacing:-0.25px;">Save</div>
<div style="position:absolute;left:45px;top:532px;width:40px;height:17px;background:#f0f0f0;box-sizing:border-box;border-top:1px solid #fff;border-left:1px solid #fff;border-bottom:1px solid #696969;border-right:1px solid #696969;box-shadow:inset 1px 1px 0 #e3e3e3, inset -1px -1px 0 #a0a0a0;"></div>
<div style="position:absolute;top:536.3px;font-size:11px;line-height:11px;color:#000;white-space:pre;left:-35px;width:200px;text-align:center;letter-spacing:-0.25px;">Zoom</div>
<div style="position:absolute;left:93px;top:532px;width:40px;height:17px;background:#f0f0f0;box-sizing:border-box;border-top:1px solid #fff;border-left:1px solid #fff;border-bottom:1px solid #696969;border-right:1px solid #696969;box-shadow:inset 1px 1px 0 #e3e3e3, inset -1px -1px 0 #a0a0a0;"></div>
<div style="position:absolute;top:536.3px;font-size:11px;line-height:11px;color:#a0a0a0;white-space:pre;left:13px;width:200px;text-align:center;letter-spacing:-0.25px;">Recall</div>
<div style="position:absolute;left:178px;top:455px;width:70px;height:100px;box-sizing:border-box;border:1px solid #fff;"></div>
<div style="position:absolute;left:177px;top:454px;width:70px;height:100px;box-sizing:border-box;border:1px solid #a0a0a0;"></div>
<div style="position:absolute;left:184px;top:452px;width:42px;height:5px;background:#f0f0f0;"></div>
<div style="position:absolute;top:450.29999999999995px;font-size:11px;line-height:11px;color:#000;white-space:pre;left:187px;letter-spacing:-0.25px;">BANDS</div>
<div style="position:absolute;left:185px;top:471px;width:13px;height:13px;background:#f0f0f0;box-sizing:border-box;border-top:1px solid #a0a0a0;border-left:1px solid #a0a0a0;border-bottom:1px solid #fff;border-right:1px solid #fff;box-shadow:inset 1px 1px 0 #696969, inset -1px -1px 0 #e3e3e3;"></div>
<div style="position:absolute;top:472.29999999999995px;font-size:11px;line-height:11px;color:#000;white-space:pre;left:202.5px;letter-spacing:-0.25px;">HF</div>
<div style="position:absolute;left:185px;top:492px;width:13px;height:13px;background:#f0f0f0;box-sizing:border-box;border-top:1px solid #a0a0a0;border-left:1px solid #a0a0a0;border-bottom:1px solid #fff;border-right:1px solid #fff;box-shadow:inset 1px 1px 0 #696969, inset -1px -1px 0 #e3e3e3;"></div>
<div style="position:absolute;top:493.29999999999995px;font-size:11px;line-height:11px;color:#000;white-space:pre;left:202.5px;letter-spacing:-0.25px;">VHF</div>
<div style="position:absolute;left:259px;top:450px;width:295px;height:18px;background:#ffffc0;box-sizing:border-box;border-top:1px solid #a0a0a0;border-left:1px solid #a0a0a0;border-bottom:1px solid #fff;border-right:1px solid #fff;box-shadow:inset 1px 1px 0 #696969, inset -1px -1px 0 #e3e3e3;"></div>
<div style="position:absolute;left:260px;top:480px;width:43px;height:76px;box-sizing:border-box;border:1px solid #fff;"></div>
<div style="position:absolute;left:259px;top:479px;width:43px;height:76px;box-sizing:border-box;border:1px solid #a0a0a0;"></div>
<div style="position:absolute;left:264px;top:483px;width:36px;height:20px;background:#fff;box-sizing:border-box;border-top:1px solid #a0a0a0;border-left:1px solid #a0a0a0;border-bottom:1px solid #fff;border-right:1px solid #fff;box-shadow:inset 1px 1px 0 #696969, inset -1px -1px 0 #e3e3e3;"></div>
<div style="position:absolute;top:488.29999999999995px;font-size:11px;line-height:11px;color:#000;white-space:pre;left:182px;width:200px;text-align:center;letter-spacing:-0.25px;">500</div>
<div style="position:absolute;top:506.29999999999995px;font-size:11px;line-height:11px;color:#000;white-space:pre;left:180px;width:200px;text-align:center;letter-spacing:-0.25px;">Steps</div>
<div style="position:absolute;left:314px;top:481px;width:243px;height:75px;box-sizing:border-box;border:1px solid #fff;"></div>
<div style="position:absolute;left:313px;top:480px;width:243px;height:75px;box-sizing:border-box;border:1px solid #a0a0a0;"></div>
<div style="position:absolute;left:319px;top:478px;width:105px;height:5px;background:#f0f0f0;"></div>
<div style="position:absolute;top:476.29999999999995px;font-size:11px;line-height:11px;color:#000;white-space:pre;left:322px;letter-spacing:-0.25px;">BANDWIDTH and Q</div>
<div style="position:absolute;left:335px;top:506px;width:84px;height:18px;background:#80ff80;box-sizing:border-box;border-top:1px solid #a0a0a0;border-left:1px solid #a0a0a0;border-bottom:1px solid #fff;border-right:1px solid #fff;box-shadow:inset 1px 1px 0 #696969, inset -1px -1px 0 #e3e3e3;"></div>
<div style="position:absolute;top:509.59999999999997px;font-size:12px;line-height:12px;color:#000;white-space:pre;font-weight:bold;left:278px;width:200px;text-align:center;letter-spacing:0.25px;word-spacing:1px;">352 000</div>
<div style="position:absolute;top:527.8px;font-size:11px;line-height:11px;color:#000;white-space:pre;left:278px;width:200px;text-align:center;letter-spacing:-0.25px;">Bandwidth</div>
<div style="position:absolute;left:449px;top:506px;width:84px;height:18px;background:#ffff00;box-sizing:border-box;border-top:1px solid #a0a0a0;border-left:1px solid #a0a0a0;border-bottom:1px solid #fff;border-right:1px solid #fff;box-shadow:inset 1px 1px 0 #696969, inset -1px -1px 0 #e3e3e3;"></div>
<div style="position:absolute;top:509.59999999999997px;font-size:12px;line-height:12px;color:#000;white-space:pre;font-weight:bold;left:391.5px;width:200px;text-align:center;letter-spacing:0.25px;word-spacing:1px;">40</div>
<div style="position:absolute;top:527.8px;font-size:11px;line-height:11px;color:#000;white-space:pre;left:392.5px;width:200px;text-align:center;letter-spacing:-0.25px;">Q</div>
<div style="position:absolute;left:565px;top:455px;width:213px;height:100px;box-sizing:border-box;border:1px solid #fff;"></div>
<div style="position:absolute;left:564px;top:454px;width:213px;height:100px;box-sizing:border-box;border:1px solid #a0a0a0;"></div>
<div style="position:absolute;left:571px;top:452px;width:167px;height:5px;background:#f0f0f0;"></div>
<div style="position:absolute;top:450.29999999999995px;font-size:11px;line-height:11px;color:#000;white-space:pre;left:574px;letter-spacing:-0.25px;">TRACE ENABLE AND COLOURS</div>
<div style="position:absolute;top:470.29999999999995px;font-size:11px;line-height:11px;color:#c02020;white-space:pre;right:173px;text-align:right;letter-spacing:-0.25px;word-spacing:1.2px;">SWR</div>
<div style="position:absolute;left:630px;top:469px;width:13px;height:13px;background:#ff0000;box-sizing:border-box;border-top:1px solid #fff;border-left:1px solid #fff;border-bottom:1px solid #696969;border-right:1px solid #696969;box-shadow:inset 1px 1px 0 #e3e3e3, inset -1px -1px 0 #a0a0a0;"></div>
<div style="position:absolute;left:649px;top:468px;width:13px;height:13px;background:#f0f0f0;box-sizing:border-box;border-top:1px solid #a0a0a0;border-left:1px solid #a0a0a0;border-bottom:1px solid #fff;border-right:1px solid #fff;box-shadow:inset 1px 1px 0 #696969, inset -1px -1px 0 #e3e3e3;"></div>
<div style="position:absolute;top:492.29999999999995px;font-size:11px;line-height:11px;color:#800080;white-space:pre;right:173px;text-align:right;letter-spacing:-0.25px;word-spacing:1.2px;"><span style="margin:0 1.6px">|</span>Z<span style="margin:0 1.6px">|</span> / ohm</div>
<div style="position:absolute;left:630px;top:490px;width:13px;height:13px;background:#800080;box-sizing:border-box;border-top:1px solid #fff;border-left:1px solid #fff;border-bottom:1px solid #696969;border-right:1px solid #696969;box-shadow:inset 1px 1px 0 #e3e3e3, inset -1px -1px 0 #a0a0a0;"></div>
<div style="position:absolute;left:649px;top:490px;width:13px;height:13px;background:#f0f0f0;box-sizing:border-box;border-top:1px solid #a0a0a0;border-left:1px solid #a0a0a0;border-bottom:1px solid #fff;border-right:1px solid #fff;box-shadow:inset 1px 1px 0 #696969, inset -1px -1px 0 #e3e3e3;"></div>
<div style="position:absolute;top:513.3px;font-size:11px;line-height:11px;color:#000080;white-space:pre;right:173px;text-align:right;letter-spacing:-0.25px;word-spacing:1.2px;">Loss / dB</div>
<div style="position:absolute;left:630px;top:512px;width:13px;height:13px;background:#0000ff;box-sizing:border-box;border-top:1px solid #fff;border-left:1px solid #fff;border-bottom:1px solid #696969;border-right:1px solid #696969;box-shadow:inset 1px 1px 0 #e3e3e3, inset -1px -1px 0 #a0a0a0;"></div>
<div style="position:absolute;left:649px;top:511px;width:13px;height:13px;background:#fff;box-sizing:border-box;border-top:1px solid #a0a0a0;border-left:1px solid #a0a0a0;border-bottom:1px solid #fff;border-right:1px solid #fff;box-shadow:inset 1px 1px 0 #696969, inset -1px -1px 0 #e3e3e3;"></div>
<svg style="position:absolute;left:649px;top:511px" width="13" height="13"><path d="M3 5h1v3h-1z M4 6h1v3h-1z M5 7h1v3h-1z M6 6h1v3h-1z M7 5h1v3h-1z M8 4h1v3h-1z M9 3h1v3h-1z" fill="#000" shape-rendering="crispEdges"/></svg>
<div style="position:absolute;top:469.29999999999995px;font-size:11px;line-height:11px;color:#b86c28;white-space:pre;right:69.5px;text-align:right;letter-spacing:-0.25px;word-spacing:1.2px;">PHASE /*</div>
<div style="position:absolute;left:733px;top:468px;width:13px;height:13px;background:#c06000;box-sizing:border-box;border-top:1px solid #fff;border-left:1px solid #fff;border-bottom:1px solid #696969;border-right:1px solid #696969;box-shadow:inset 1px 1px 0 #e3e3e3, inset -1px -1px 0 #a0a0a0;"></div>
<div style="position:absolute;left:752px;top:467px;width:13px;height:13px;background:#fff;box-sizing:border-box;border-top:1px solid #a0a0a0;border-left:1px solid #a0a0a0;border-bottom:1px solid #fff;border-right:1px solid #fff;box-shadow:inset 1px 1px 0 #696969, inset -1px -1px 0 #e3e3e3;"></div>
<div style="position:absolute;top:490.29999999999995px;font-size:11px;line-height:11px;color:#000;white-space:pre;right:69.5px;text-align:right;letter-spacing:-0.25px;word-spacing:1.2px;">Rs / ohm</div>
<div style="position:absolute;left:733px;top:490px;width:13px;height:13px;background:#000000;box-sizing:border-box;border-top:1px solid #fff;border-left:1px solid #fff;border-bottom:1px solid #696969;border-right:1px solid #696969;box-shadow:inset 1px 1px 0 #e3e3e3, inset -1px -1px 0 #a0a0a0;"></div>
<div style="position:absolute;left:752px;top:489px;width:13px;height:13px;background:#f0f0f0;box-sizing:border-box;border-top:1px solid #a0a0a0;border-left:1px solid #a0a0a0;border-bottom:1px solid #fff;border-right:1px solid #fff;box-shadow:inset 1px 1px 0 #696969, inset -1px -1px 0 #e3e3e3;"></div>
<div style="position:absolute;top:511.29999999999995px;font-size:11px;line-height:11px;color:#0a800a;white-space:pre;right:69.5px;text-align:right;letter-spacing:-0.25px;word-spacing:1.2px;"><span style="margin:0 1.6px">|</span>Xs<span style="margin:0 1.6px">|</span> / ohm</div>
<div style="position:absolute;left:733px;top:511px;width:13px;height:13px;background:#008000;box-sizing:border-box;border-top:1px solid #fff;border-left:1px solid #fff;border-bottom:1px solid #696969;border-right:1px solid #696969;box-shadow:inset 1px 1px 0 #e3e3e3, inset -1px -1px 0 #a0a0a0;"></div>
<div style="position:absolute;left:752px;top:510px;width:13px;height:13px;background:#f0f0f0;box-sizing:border-box;border-top:1px solid #a0a0a0;border-left:1px solid #a0a0a0;border-bottom:1px solid #fff;border-right:1px solid #fff;box-shadow:inset 1px 1px 0 #696969, inset -1px -1px 0 #e3e3e3;"></div>
<div style="position:absolute;left:624px;top:534px;width:40px;height:17px;background:#f0f0f0;box-sizing:border-box;border-top:1px solid #fff;border-left:1px solid #fff;border-bottom:1px solid #696969;border-right:1px solid #696969;box-shadow:inset 1px 1px 0 #e3e3e3, inset -1px -1px 0 #a0a0a0;"></div>
<div style="position:absolute;top:537.8px;font-size:11px;line-height:11px;color:#000;white-space:pre;left:544px;width:200px;text-align:center;letter-spacing:-0.25px;">All</div>
<div style="position:absolute;left:727px;top:534px;width:40px;height:17px;background:#f0f0f0;box-sizing:border-box;border-top:1px solid #fff;border-left:1px solid #fff;border-bottom:1px solid #696969;border-right:1px solid #696969;box-shadow:inset 1px 1px 0 #e3e3e3, inset -1px -1px 0 #a0a0a0;"></div>
<div style="position:absolute;top:537.8px;font-size:11px;line-height:11px;color:#000;white-space:pre;left:647px;width:200px;text-align:center;letter-spacing:-0.25px;">None</div>
</body></html>
